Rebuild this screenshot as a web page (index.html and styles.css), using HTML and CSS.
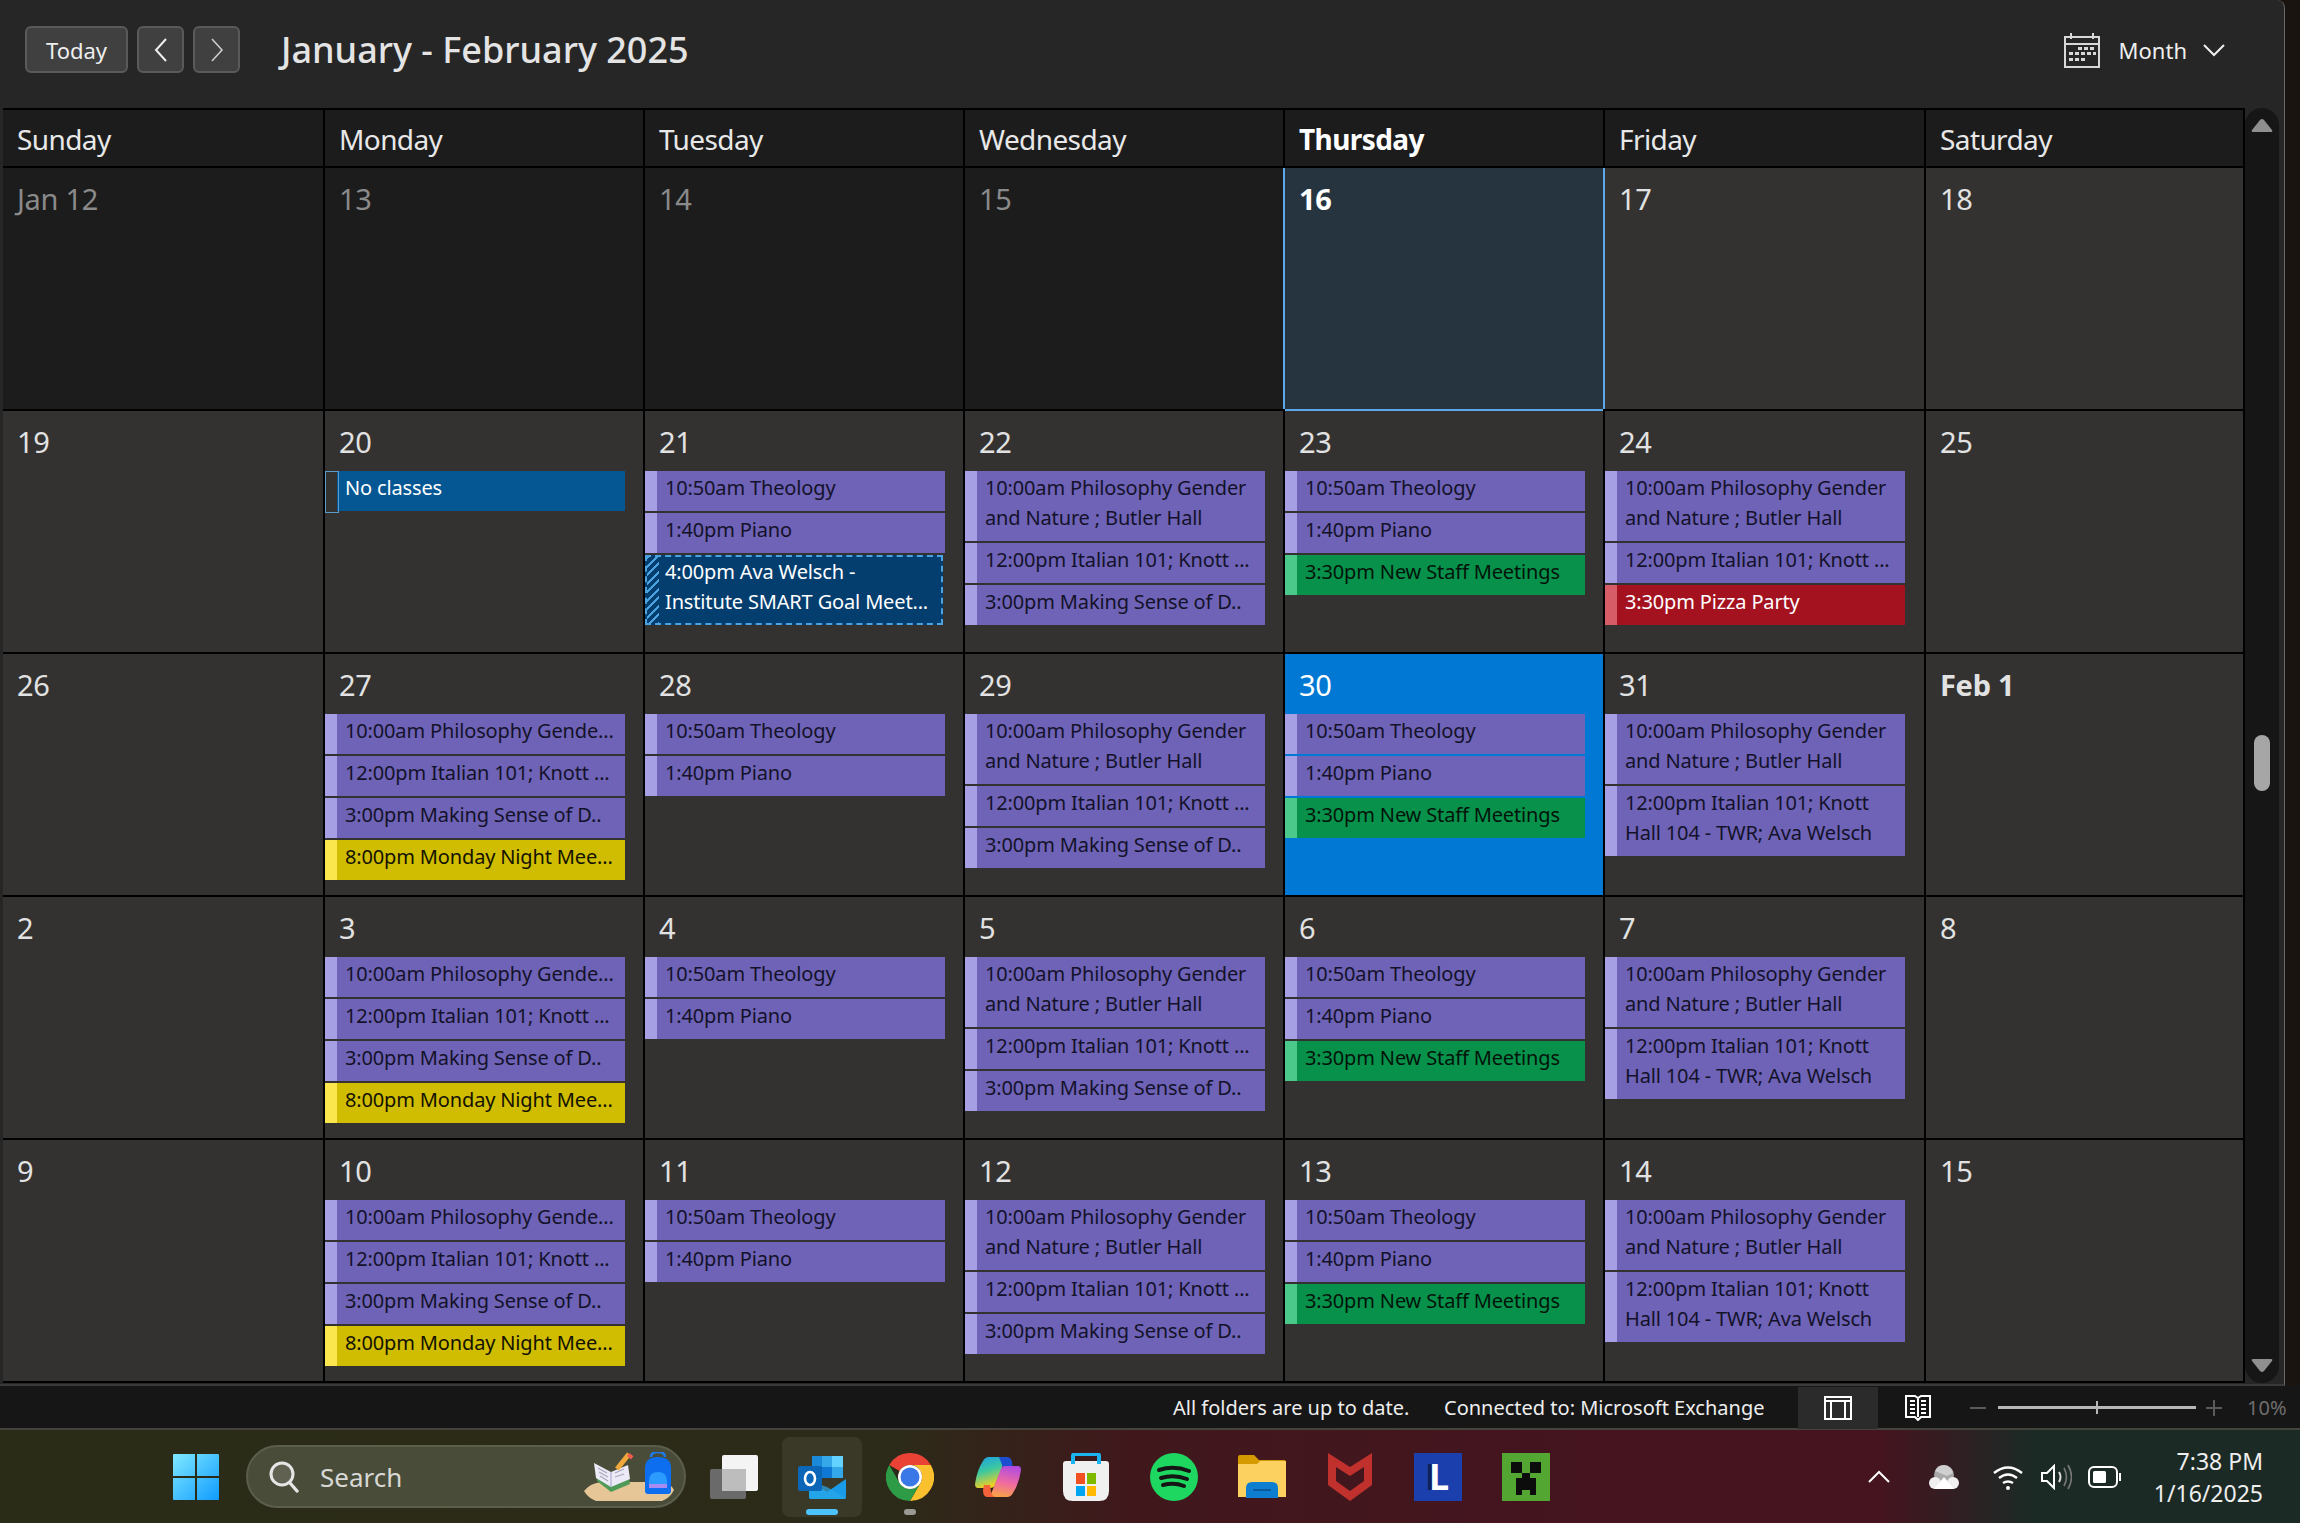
FILE: index.html
```html
<!DOCTYPE html>
<html lang="en">
<head>
  <meta charset="UTF-8" />
  <meta name="viewport" content="width=device-width, initial-scale=1.0" />
  <title>Calendar</title>
  <link rel="stylesheet" href="styles.css">
</head>
<body>
  <div class="desk">
    <div class="window">
      <div class="toolbar">
        <button class="btn btn-today">Today</button>
        <button class="btn btn-nav">
          <svg width="14" height="26" viewBox="0 0 14 26"><path d="M12 2 2 13l10 11" fill="none" stroke="#eee" stroke-width="2"/></svg>
        </button>
        <button class="btn btn-nav">
          <svg width="14" height="26" viewBox="0 0 14 26"><path d="m2 2 10 11L2 24" fill="none" stroke="#ccc" stroke-width="1.6"/></svg>
        </button>
        <h1 class="title">January - February 2025</h1>
        <div class="view-pick">
          <svg class="cal-icon" width="36" height="36" viewBox="0 0 36 36">
            <path d="M1 5h34v30H1zM1 12h34M7 1v6M29 1v6" fill="none" stroke="#d8d8d8" stroke-width="2"/>
            <path d="M14 15h4v3h-4zM20 15h4v3h-4zM26 15h4v3h-4zM5 20h4v3H5zM11 20h4v3h-4zM17 20h4v3h-4zM23 20h4v3h-4zM29 20h3v3h-3zM5 26h4v3H5zM11 26h4v3h-4zM17 26h4v3h-4z" fill="#d8d8d8"/>
          </svg>
          <span class="view-label">Month</span>
          <svg width="22" height="14" viewBox="0 0 22 14"><path d="m1 2 10 10L21 2" fill="none" stroke="#eee" stroke-width="2"/></svg>
        </div>
      </div>

      <div class="cal-wrap">
        <div class="cal">
          <div class="head">Sunday</div>
          <div class="head">Monday</div>
          <div class="head">Tuesday</div>
          <div class="head">Wednesday</div>
          <div class="head head-now">Thursday</div>
          <div class="head">Friday</div>
          <div class="head">Saturday</div>

          <div class="cell past"><div class="date">Jan 12</div></div>
          <div class="cell past"><div class="date">13</div></div>
          <div class="cell past"><div class="date">14</div></div>
          <div class="cell past"><div class="date">15</div></div>
          <div class="cell today"><div class="date">16</div></div>
          <div class="cell"><div class="date">17</div></div>
          <div class="cell"><div class="date">18</div></div>

          <div class="cell"><div class="date">19</div></div>
          <div class="cell"><div class="date">20</div>
            <div class="ev blue">No classes</div>
          </div>
          <div class="cell"><div class="date">21</div>
            <div class="ev purple">10:50am Theology</div>
            <div class="ev purple">1:40pm Piano</div>
            <div class="ev tent">4:00pm Ava Welsch -<br>Institute SMART Goal Meet...</div>
          </div>
          <div class="cell"><div class="date">22</div>
            <div class="ev purple">10:00am Philosophy Gender<br>and Nature ; Butler Hall</div>
            <div class="ev purple">12:00pm Italian 101; Knott ...</div>
            <div class="ev purple">3:00pm Making Sense of D..</div>
          </div>
          <div class="cell"><div class="date">23</div>
            <div class="ev purple">10:50am Theology</div>
            <div class="ev purple">1:40pm Piano</div>
            <div class="ev green">3:30pm New Staff Meetings</div>
          </div>
          <div class="cell"><div class="date">24</div>
            <div class="ev purple">10:00am Philosophy Gender<br>and Nature ; Butler Hall</div>
            <div class="ev purple">12:00pm Italian 101; Knott ...</div>
            <div class="ev red">3:30pm Pizza Party</div>
          </div>
          <div class="cell"><div class="date">25</div></div>

          <div class="cell"><div class="date">26</div></div>
          <div class="cell"><div class="date">27</div>
            <div class="ev purple">10:00am Philosophy Gende...</div>
            <div class="ev purple">12:00pm Italian 101; Knott ...</div>
            <div class="ev purple">3:00pm Making Sense of D..</div>
            <div class="ev yellow">8:00pm Monday Night Mee...</div>
          </div>
          <div class="cell"><div class="date">28</div>
            <div class="ev purple">10:50am Theology</div>
            <div class="ev purple">1:40pm Piano</div>
          </div>
          <div class="cell"><div class="date">29</div>
            <div class="ev purple">10:00am Philosophy Gender<br>and Nature ; Butler Hall</div>
            <div class="ev purple">12:00pm Italian 101; Knott ...</div>
            <div class="ev purple">3:00pm Making Sense of D..</div>
          </div>
          <div class="cell picked"><div class="date">30</div>
            <div class="ev purple">10:50am Theology</div>
            <div class="ev purple">1:40pm Piano</div>
            <div class="ev green">3:30pm New Staff Meetings</div>
          </div>
          <div class="cell"><div class="date">31</div>
            <div class="ev purple">10:00am Philosophy Gender<br>and Nature ; Butler Hall</div>
            <div class="ev purple">12:00pm Italian 101; Knott<br>Hall 104 - TWR; Ava Welsch</div>
          </div>
          <div class="cell"><div class="date date-bold">Feb 1</div></div>

          <div class="cell"><div class="date">2</div></div>
          <div class="cell"><div class="date">3</div>
            <div class="ev purple">10:00am Philosophy Gende...</div>
            <div class="ev purple">12:00pm Italian 101; Knott ...</div>
            <div class="ev purple">3:00pm Making Sense of D..</div>
            <div class="ev yellow">8:00pm Monday Night Mee...</div>
          </div>
          <div class="cell"><div class="date">4</div>
            <div class="ev purple">10:50am Theology</div>
            <div class="ev purple">1:40pm Piano</div>
          </div>
          <div class="cell"><div class="date">5</div>
            <div class="ev purple">10:00am Philosophy Gender<br>and Nature ; Butler Hall</div>
            <div class="ev purple">12:00pm Italian 101; Knott ...</div>
            <div class="ev purple">3:00pm Making Sense of D..</div>
          </div>
          <div class="cell"><div class="date">6</div>
            <div class="ev purple">10:50am Theology</div>
            <div class="ev purple">1:40pm Piano</div>
            <div class="ev green">3:30pm New Staff Meetings</div>
          </div>
          <div class="cell"><div class="date">7</div>
            <div class="ev purple">10:00am Philosophy Gender<br>and Nature ; Butler Hall</div>
            <div class="ev purple">12:00pm Italian 101; Knott<br>Hall 104 - TWR; Ava Welsch</div>
          </div>
          <div class="cell"><div class="date">8</div></div>

          <div class="cell"><div class="date">9</div></div>
          <div class="cell"><div class="date">10</div>
            <div class="ev purple">10:00am Philosophy Gende...</div>
            <div class="ev purple">12:00pm Italian 101; Knott ...</div>
            <div class="ev purple">3:00pm Making Sense of D..</div>
            <div class="ev yellow">8:00pm Monday Night Mee...</div>
          </div>
          <div class="cell"><div class="date">11</div>
            <div class="ev purple">10:50am Theology</div>
            <div class="ev purple">1:40pm Piano</div>
          </div>
          <div class="cell"><div class="date">12</div>
            <div class="ev purple">10:00am Philosophy Gender<br>and Nature ; Butler Hall</div>
            <div class="ev purple">12:00pm Italian 101; Knott ...</div>
            <div class="ev purple">3:00pm Making Sense of D..</div>
          </div>
          <div class="cell"><div class="date">13</div>
            <div class="ev purple">10:50am Theology</div>
            <div class="ev purple">1:40pm Piano</div>
            <div class="ev green">3:30pm New Staff Meetings</div>
          </div>
          <div class="cell"><div class="date">14</div>
            <div class="ev purple">10:00am Philosophy Gender<br>and Nature ; Butler Hall</div>
            <div class="ev purple">12:00pm Italian 101; Knott<br>Hall 104 - TWR; Ava Welsch</div>
          </div>
          <div class="cell"><div class="date">15</div></div>
        </div>

        <div class="scroll">
          <svg class="arrow" width="22" height="15" viewBox="0 0 22 15"><path d="M9 2q2-2 4 0l8 10q1 2-1 2H2q-2 0-1-2z" fill="#8f8f8f"/></svg>
          <svg class="arrow" width="22" height="15" viewBox="0 0 22 15"><path d="M9 13q2 2 4 0l8-10q1-2-1-2H2Q0 1 1 3z" fill="#8f8f8f"/></svg>
          <div class="thumb"></div>
        </div>
      </div>
    </div>

    <div class="status">
      <span class="status-msg">All folders are up to date.</span>
      <span class="status-msg status-conn">Connected to: Microsoft Exchange</span>
      <div class="status-view status-view-on">
        <svg width="28" height="24" viewBox="0 0 28 24"><path d="M1 1h26v22H1zM1 5h26M7 5v18M21 5v18" fill="none" stroke="#fff" stroke-width="2"/></svg>
      </div>
      <div class="status-view">
        <svg width="26" height="26" viewBox="0 0 26 26"><path d="M1 1h9l3 2 3-2h9v21h-9l-3 3-3-3H1zM13 3v19M5 6h5M5 10h5M5 14h5M5 18h5M16 6h5M16 10h5M16 14h5M16 18h5" fill="none" stroke="#fff" stroke-width="2"/></svg>
      </div>
      <div class="zoom-bar">
        <span class="zoom-sign"></span>
        <div class="zoom-track"><span class="zoom-tick"></span></div>
        <span class="zoom-sign zoom-plus"></span>
        <span class="zoom-pct">10%</span>
      </div>
    </div>
  </div>

  <div class="taskbar">
    <svg class="win-logo" width="46" height="46" viewBox="0 0 46 46">
      <defs>
        <linearGradient id="winG" x1="0" y1="0" x2="1" y2="1"><stop offset="0" stop-color="#7fe9ff"/><stop offset="1" stop-color="#0f9bff"/></linearGradient>
      </defs>
      <path d="M1 0h21v22H0V1q0-1 1-1zM24 0h21q1 0 1 1v21H24zM0 24h22v22H1q-1 0-1-1zM24 24h22v21q0 1-1 1H24z" fill="url(#winG)"/>
    </svg>

    <div class="search">
      <svg width="30" height="32" viewBox="0 0 30 32"><circle cx="13" cy="13" r="11" fill="rgba(255,255,255,.12)" stroke="#e6e6e6" stroke-width="3"/><path d="m21 22 7 8" stroke="#e6e6e6" stroke-width="3.4" stroke-linecap="round"/></svg>
      <span class="search-text">Search</span>
      <svg class="search-art" width="90" height="50" viewBox="0 0 90 50">
        <path d="M0 39q6-8 18-9h62q6 1 10 8-4 8-12 11H12Q4 46 0 39z" fill="#e6c697"/>
        <path d="m12 13 15 10 17-6 2 15-19 8-14-11z" fill="#4f9a58"/>
        <path d="m10 11 17 9 17-7 2 14-19 8-15-9z" fill="#eceaf6"/>
        <path d="m27 20 0 15" stroke="#b9b5d6" stroke-width="1.4"/>
        <path d="m14 16 9 5M15 20l9 5M16 24l8 5M31 21l9-4M31 25l9-3" stroke="#a9a7bd" stroke-width="1.2"/>
        <path d="m33 17 12-15" stroke="#f0a83a" stroke-width="5"/>
        <path d="m43 4 2.400-3 4 3.200L47 7.500z" fill="#ef5b4c"/>
        <path d="M61 39V16q0-11 13-11t13 11v23q0 3-3 3H64q-3 0-3-3z" fill="#0d6ff0"/>
        <path d="M67 5q0-5 7-5t7 5" fill="none" stroke="#1b7cf0" stroke-width="2.400"/>
        <path d="M65 36V29q0-9 9-9t9 9v7z" fill="#2b9bff"/>
        <path d="M65 32h18v4H65z" fill="#a78bf0"/>
      </svg>
    </div>

    <div class="tasks">
      <div class="task">
        <svg width="48" height="44" viewBox="0 0 48 44">
          <rect y="14" width="36" height="30" rx="2" fill="#6a6a6a"/>
          <rect x="12" width="36" height="36" rx="2" fill="#f4f4f4"/>
          <rect x="12" y="14" width="24" height="22" fill="#bdbdbd"/>
        </svg>
      </div>
      <div class="task task-on">
        <svg width="48" height="44" viewBox="0 0 48 44">
          <path d="M14 1h30q1 0 1 1v20H14z" fill="#0f6cbd"/>
          <path d="M14 1h10v11H14z" fill="#1a8ad8"/>
          <path d="M24 1h10v11H24z" fill="#35a8ea"/>
          <path d="M34 1h11v11H34z" fill="#64d2ff"/>
          <path d="M24 12h10v11H24z" fill="#0f78d4"/>
          <path d="M34 12h11v11H34z" fill="#35a8ea"/>
          <path d="M11 26 29 37 48 24v18q0 2-2 2H13q-2 0-2-2z" fill="#1a9be8"/>
          <path d="M11 26v16q0 2 2 2h33q1 0 2-1L29 32z" fill="#28a8ea" opacity=".7"/>
          <rect y="11" width="24" height="25" rx="2" fill="#0c66b8"/>
          <ellipse cx="12" cy="23.500" rx="5" ry="6.500" fill="none" stroke="#fff" stroke-width="2.600"/>
        </svg>
        <span class="task-mark"></span>
      </div>
      <div class="task task-run">
        <svg width="48" height="48" viewBox="0 0 48 48">
          <path d="M3.200 12A24 24 0 0 1 44.800 12H24A12 12 0 0 0 13.600 18z" fill="#ea4335"/>
          <path d="M24 12H44.800A24 24 0 0 1 24 48L34.400 30A12 12 0 0 0 24 12z" fill="#fbc02d"/>
          <path d="M3.200 12 13.600 30A12 12 0 0 0 34.400 30L24 48A24 24 0 0 1 3.200 12z" fill="#2e9b47"/>
          <circle cx="24" cy="24" r="12" fill="#fff"/>
          <circle cx="24" cy="24" r="9.500" fill="#3b78e7"/>
        </svg>
        <span class="task-mark task-mark-off"></span>
      </div>
      <div class="task">
        <svg width="46" height="42" viewBox="0 0 46 42">
          <defs>
            <linearGradient id="coA" x1="0" y1="0" x2=".3" y2="1"><stop offset="0" stop-color="#1b9de8"/><stop offset=".5" stop-color="#3cc8a0"/><stop offset="1" stop-color="#f0d020"/></linearGradient>
            <linearGradient id="coB" x1=".6" y1="0" x2=".4" y2="1"><stop offset="0" stop-color="#b14be0"/><stop offset=".55" stop-color="#f06ca0"/><stop offset="1" stop-color="#f7a04a"/></linearGradient>
          </defs>
          <path d="M14 1h14q3 0 2 3L20 29q-1 3-5 3H3q-3 0-3-4 2-14 8-23 2-4 6-4z" fill="url(#coA)"/>
          <path d="M24 1h8q4 0 5 5l1 8h-9z" fill="#1c4fd0"/>
          <path d="M32 41H18q-3 0-2-3l10-25q1-3 5-3h12q3 0 3 4-2 14-8 23-2 4-6 4z" fill="url(#coB)"/>
          <path d="M12 41h8q-3-1-4-5l-1-7H9l-1 5q0 7 4 7z" fill="#f4613a"/>
        </svg>
      </div>
      <div class="task">
        <svg width="46" height="48" viewBox="0 0 46 48">
          <path d="M3 8h40q3 0 3 3v27q0 10-10 10H10Q0 48 0 38V11q0-3 3-3z" fill="#f0f0f0"/>
          <path d="M10 11V3q0-2 2-2h22q2 0 2 2v8" fill="none" stroke="#1cb4f0" stroke-width="4"/>
          <path d="M13 20h9v11h-9z" fill="#f25022"/>
          <path d="M24 20h9v11h-9z" fill="#7fba00"/>
          <path d="M13 33h9v10h-9z" fill="#00a4ef"/>
          <path d="M24 33h9v10h-9z" fill="#ffb900"/>
        </svg>
      </div>
      <div class="task">
        <svg width="48" height="48" viewBox="0 0 48 48">
          <circle cx="24" cy="24" r="24" fill="#1ed760"/>
          <path d="M9 17q15-5 30 1M11 25q13-4 26 1M13 32q11-3 21 1" fill="none" stroke="#151515" stroke-width="4" stroke-linecap="round"/>
        </svg>
      </div>
      <div class="task">
        <svg width="48" height="43" viewBox="0 0 48 43">
          <path d="M0 2q0-2 2-2h14l5 5h25q2 0 2 2v6H0z" fill="#d49a00"/>
          <path d="M0 9h19l3-3h26v36H0z" fill="#fdd160"/>
          <path d="M8 43V33q0-6 6-6h20q6 0 6 6v10z" fill="#0e7fd0"/>
          <path d="M15 35h18" stroke="#0a5a9c" stroke-width="2"/>
        </svg>
      </div>
      <div class="task">
        <svg width="44" height="48" viewBox="0 0 44 48">
          <path d="M0 0 22 14 44 0v32L22 48 0 32zM8 14v14l14 10 14-10V14l-14 9z" fill="#c0302d" fill-rule="evenodd"/>
        </svg>
      </div>
      <div class="task">
        <div class="l-tile"><span class="l-shadow">L</span><span class="l-char">L</span></div>
      </div>
      <div class="task">
        <svg width="48" height="48" viewBox="0 0 48 48">
          <rect width="48" height="48" fill="#54a632"/>
          <path d="M9 9h11v11H9zM28 9h11v11H28zM20 20h8v5h6v17h-6v-5h-8v5h-6V25h6z" fill="#0c0c0c"/>
        </svg>
      </div>
    </div>

    <div class="tray">
      <svg class="tray-up" width="24" height="14" viewBox="0 0 24 14"><path d="m2 12 10-10 10 10" fill="none" stroke="#fff" stroke-width="2"/></svg>
      <svg class="tray-cloud" width="34" height="24" viewBox="0 0 34 24">
        <circle cx="17" cy="10" r="10" fill="#a8a8a8"/>
        <path d="M17 0a10 10 0 0 0-9 6l12 5 6-3a10 10 0 0 0-9-8z" fill="#cfcfcf"/>
        <circle cx="8" cy="18" r="6" fill="#f0f0f0"/><circle cx="26" cy="18" r="6" fill="#f0f0f0"/>
        <path d="M17 12 7 24h20z" fill="#fff"/>
      </svg>
      <svg class="tray-wifi" width="32" height="26" viewBox="0 0 32 26">
        <path d="M2 9q14-11 28 0M7 14q9-7 18 0M11 19q5-3 10 0" fill="none" stroke="#fff" stroke-width="2.400"/>
        <circle cx="16" cy="24" r="2" fill="#fff"/>
      </svg>
      <svg class="tray-sound" width="32" height="26" viewBox="0 0 32 26">
        <path d="M2 9h5l7-7v22l-7-7H2z" fill="none" stroke="#fff" stroke-width="2"/>
        <path d="M19 8q3 5 0 10" fill="none" stroke="#ddd" stroke-width="2"/>
        <path d="M24 4q5 9 0 18M28 1q7 12 0 24" fill="none" stroke="#777" stroke-width="1.600"/>
      </svg>
      <svg class="tray-batt" width="34" height="22" viewBox="0 0 34 22">
        <rect x="1" y="1" width="28" height="20" rx="5" fill="none" stroke="#fff" stroke-width="2"/>
        <rect x="5" y="5" width="13" height="12" rx="1.500" fill="#fff"/>
        <path d="M31 7h2v8h-2z" fill="#fff"/>
      </svg>
      <div class="clock">
        <div>7:38 PM</div>
        <div>1/16/2025</div>
      </div>
    </div>
  </div>
</body>
</html>
```

FILE: styles.css
```css
* {
  box-sizing: border-box;
}

body {
  margin: 0;
  width: 2300px;
  height: 1523px;
  overflow: hidden;
  background: #1a1410;
  font-family: "Noto Sans", sans-serif;
  color: #eee;
}

.desk {
  height: 1428px;
  display: flex;
  flex-direction: column;
  background: #1a1410;
}

.window {
  width: 2285px;
  height: 1386px;
  background: #262626;
  border-right: 1px solid #6a6a6a;
  border-bottom: 2px solid #3a3a3a;
  border-top-right-radius: 8px;
}

/* top bar */
.toolbar {
  height: 108px;
  display: flex;
  align-items: center;
  padding: 0 0 9px 25px;
}

.btn {
  height: 47px;
  background: #404040;
  border: 2px solid #5a5a5a;
  border-radius: 6px;
  color: #eee;
  font-family: inherit;
  display: flex;
  align-items: center;
  justify-content: center;
  padding: 0;
}

.btn-today {
  width: 103px;
  font-size: 22px;
  margin-right: 9px;
}

.btn-nav {
  width: 47px;
  margin-right: 9px;
}

.title {
  margin: 0 0 0 32px;
  font-size: 36px;
  font-weight: 500;
  color: #e4e4e4;
}

.view-pick {
  margin-left: auto;
  margin-right: 59px;
  display: flex;
  align-items: center;
}

.view-label {
  font-size: 22px;
  margin: 0 16px 0 19px;
}

/* month grid */
.cal-wrap {
  display: flex;
  padding-left: 3px;
  height: 1275px;
}

.cal {
  width: 2242px;
  display: grid;
  grid-template-columns: 320px 318px 318px 318px 318px 319px 317px;
  grid-template-rows: 56px repeat(5, 241px);
  gap: 2px;
  padding: 2px 2px 2px 0;
  background: #000;
}

.head {
  background: #1c1c1c;
  padding-left: 14px;
  font-size: 28px;
  letter-spacing: -0.6px;
  line-height: 58px;
  color: #e8e8e8;
}

.head-now {
  font-weight: 700;
  color: #fff;
}

.cell {
  background: #333231;
  display: flex;
  flex-direction: column;
  gap: 2px;
  overflow: hidden;
}

.date {
  height: 58px;
  padding: 0 0 0 14px;
  font-size: 29px;
  letter-spacing: -0.3px;
  line-height: 62px;
  color: #e2e2e2;
}

.date-bold {
  font-weight: 700;
}

.past {
  background: #1c1c1c;
}

.past .date {
  color: #8a8a8a;
}

.today {
  background: #26343f;
  box-shadow: -2px 0 0 #5ca8e8, 2px 0 0 #5ca8e8, 0 2px 0 #5ca8e8;
  z-index: 1;
}

.today .date {
  font-weight: 700;
  color: #fff;
}

.picked {
  background: #0078d4;
}

.picked .date {
  color: #fff;
}

/* events */
.ev {
  width: 300px;
  padding: 2px 0 8px 8px;
  border-left: 12px solid;
  font-size: 20px;
  letter-spacing: -0.15px;
  line-height: 30px;
  white-space: nowrap;
  overflow: hidden;
}

.purple {
  background: #6e63b6;
  border-color: #a79fe3;
  color: #14122a;
}

.green {
  background: #08914b;
  border-color: #4bc98a;
  color: #02140a;
}

.yellow {
  background: #d0bc00;
  border-color: #fbe64e;
  color: #141200;
}

.red {
  background: #a4121f;
  border-color: #d65c68;
  color: #fff;
}

.blue {
  position: relative;
  overflow: visible;
  background: #055793;
  border-color: transparent;
  background-clip: padding-box;
  color: #fff;
}

.blue::before {
  content: "";
  position: absolute;
  left: -12px;
  top: 0;
  width: 12px;
  height: 40px;
  border: 1px solid #5b9bc6;
}

.tent {
  height: 70px;
  background: #043e6f;
  color: #fff;
  border: 2px dashed #4aa3e0;
  padding: 0 0 0 18px;
  width: 298px;
  background-image: repeating-linear-gradient(135deg, #4aa3e0 0 2px, #043e6f 2px 6px);
  background-size: 12px 100%;
  background-repeat: no-repeat;
}

/* scrollbar */
.scroll {
  position: relative;
  width: 34px;
  background: #161616;
  border-radius: 17px;
  display: flex;
  flex-direction: column;
  justify-content: space-between;
  align-items: center;
  padding: 10px 0;
}

.thumb {
  position: absolute;
  left: 9px;
  top: 627px;
  width: 16px;
  height: 56px;
  border-radius: 8px;
  background: #a6a6a6;
}

/* status bar */
.status {
  height: 42px;
  width: 2300px;
  padding-top: 1px;
  background: #161616;
  display: flex;
  align-items: center;
  font-size: 20px;
  color: #eee;
  padding-left: 1173px;
}

.status-msg {
  white-space: nowrap;
  width: 271px;
}

.status-conn {
  width: 354px;
}

.status-view {
  width: 80px;
  height: 42px;
  display: flex;
  align-items: center;
  justify-content: center;
}

.status-view-on {
  background: #2b2b2b;
}

.zoom-bar {
  margin-left: 12px;
  display: flex;
  align-items: center;
}

.zoom-sign {
  position: relative;
  width: 16px;
  height: 2px;
  background: #5a5a5a;
}

.zoom-plus::after {
  content: "";
  position: absolute;
  left: 7px;
  top: -7px;
  width: 2px;
  height: 16px;
  background: #5a5a5a;
}

.zoom-track {
  position: relative;
  width: 198px;
  height: 3px;
  margin: 0 10px 0 12px;
  background: #b8b8b8;
}

.zoom-tick {
  position: absolute;
  left: 98px;
  top: -5px;
  width: 2px;
  height: 13px;
  background: #b8b8b8;
}

.zoom-pct {
  margin-left: 25px;
  color: #6e6e6e;
}

/* taskbar */
.taskbar {
  height: 95px;
  display: flex;
  align-items: center;
  padding-left: 173px;
  border-top: 2px solid #44443c;
  background: linear-gradient(to right, #2a2c18 0, #2c2a18 900px, #40181c 1130px, #45141f 1600px, #45141f 1880px, #1c2a26 2030px, #1c2a26 100%);
}

.search {
  width: 440px;
  height: 63px;
  margin-left: 27px;
  padding: 0 10px 0 21px;
  border-radius: 32px;
  border: 2px solid #5c5e4c;
  background: #4a4c3a;
  display: flex;
  align-items: center;
}

.search-text {
  margin-left: 21px;
  font-size: 26px;
  color: #d8d8d4;
}

.search-art {
  margin-left: auto;
}

.tasks {
  display: flex;
  align-items: center;
  margin-left: 24px;
  gap: 40px;
}

.task {
  position: relative;
  width: 48px;
  height: 48px;
  display: flex;
  align-items: center;
  justify-content: center;
}

.task-on::before {
  content: "";
  position: absolute;
  left: -16px;
  top: -16px;
  width: 80px;
  height: 80px;
  border-radius: 8px;
  background: rgba(255, 255, 255, 0.07);
}

.task-on svg {
  position: relative;
}

.task-mark {
  position: absolute;
  left: 8px;
  bottom: -14px;
  width: 32px;
  height: 6px;
  border-radius: 3px;
  background: #4cc2ff;
}

.task-mark-off {
  left: 18px;
  width: 12px;
  background: #9a9a92;
}

.l-tile {
  position: relative;
  width: 48px;
  height: 48px;
  background: #1c3fae;
  overflow: hidden;
}

.l-char,
.l-shadow {
  position: absolute;
  left: 15px;
  top: 4px;
  font-size: 36px;
  line-height: 40px;
  font-weight: 700;
  color: #fff;
}

.l-shadow {
  left: 11px;
  color: #0c1f5c;
}

.tray {
  margin-left: auto;
  width: 433px;
  height: 100%;
  display: flex;
  align-items: center;
}

.tray-cloud {
  margin-left: 36px;
}

.tray-wifi {
  margin-left: 31px;
}

.tray-sound {
  margin-left: 16px;
}

.tray-batt {
  margin-left: 16px;
}

.clock {
  margin-left: auto;
  padding-right: 37px;
  text-align: right;
  font-size: 23px;
  line-height: 32px;
  color: #eee;
}
```
